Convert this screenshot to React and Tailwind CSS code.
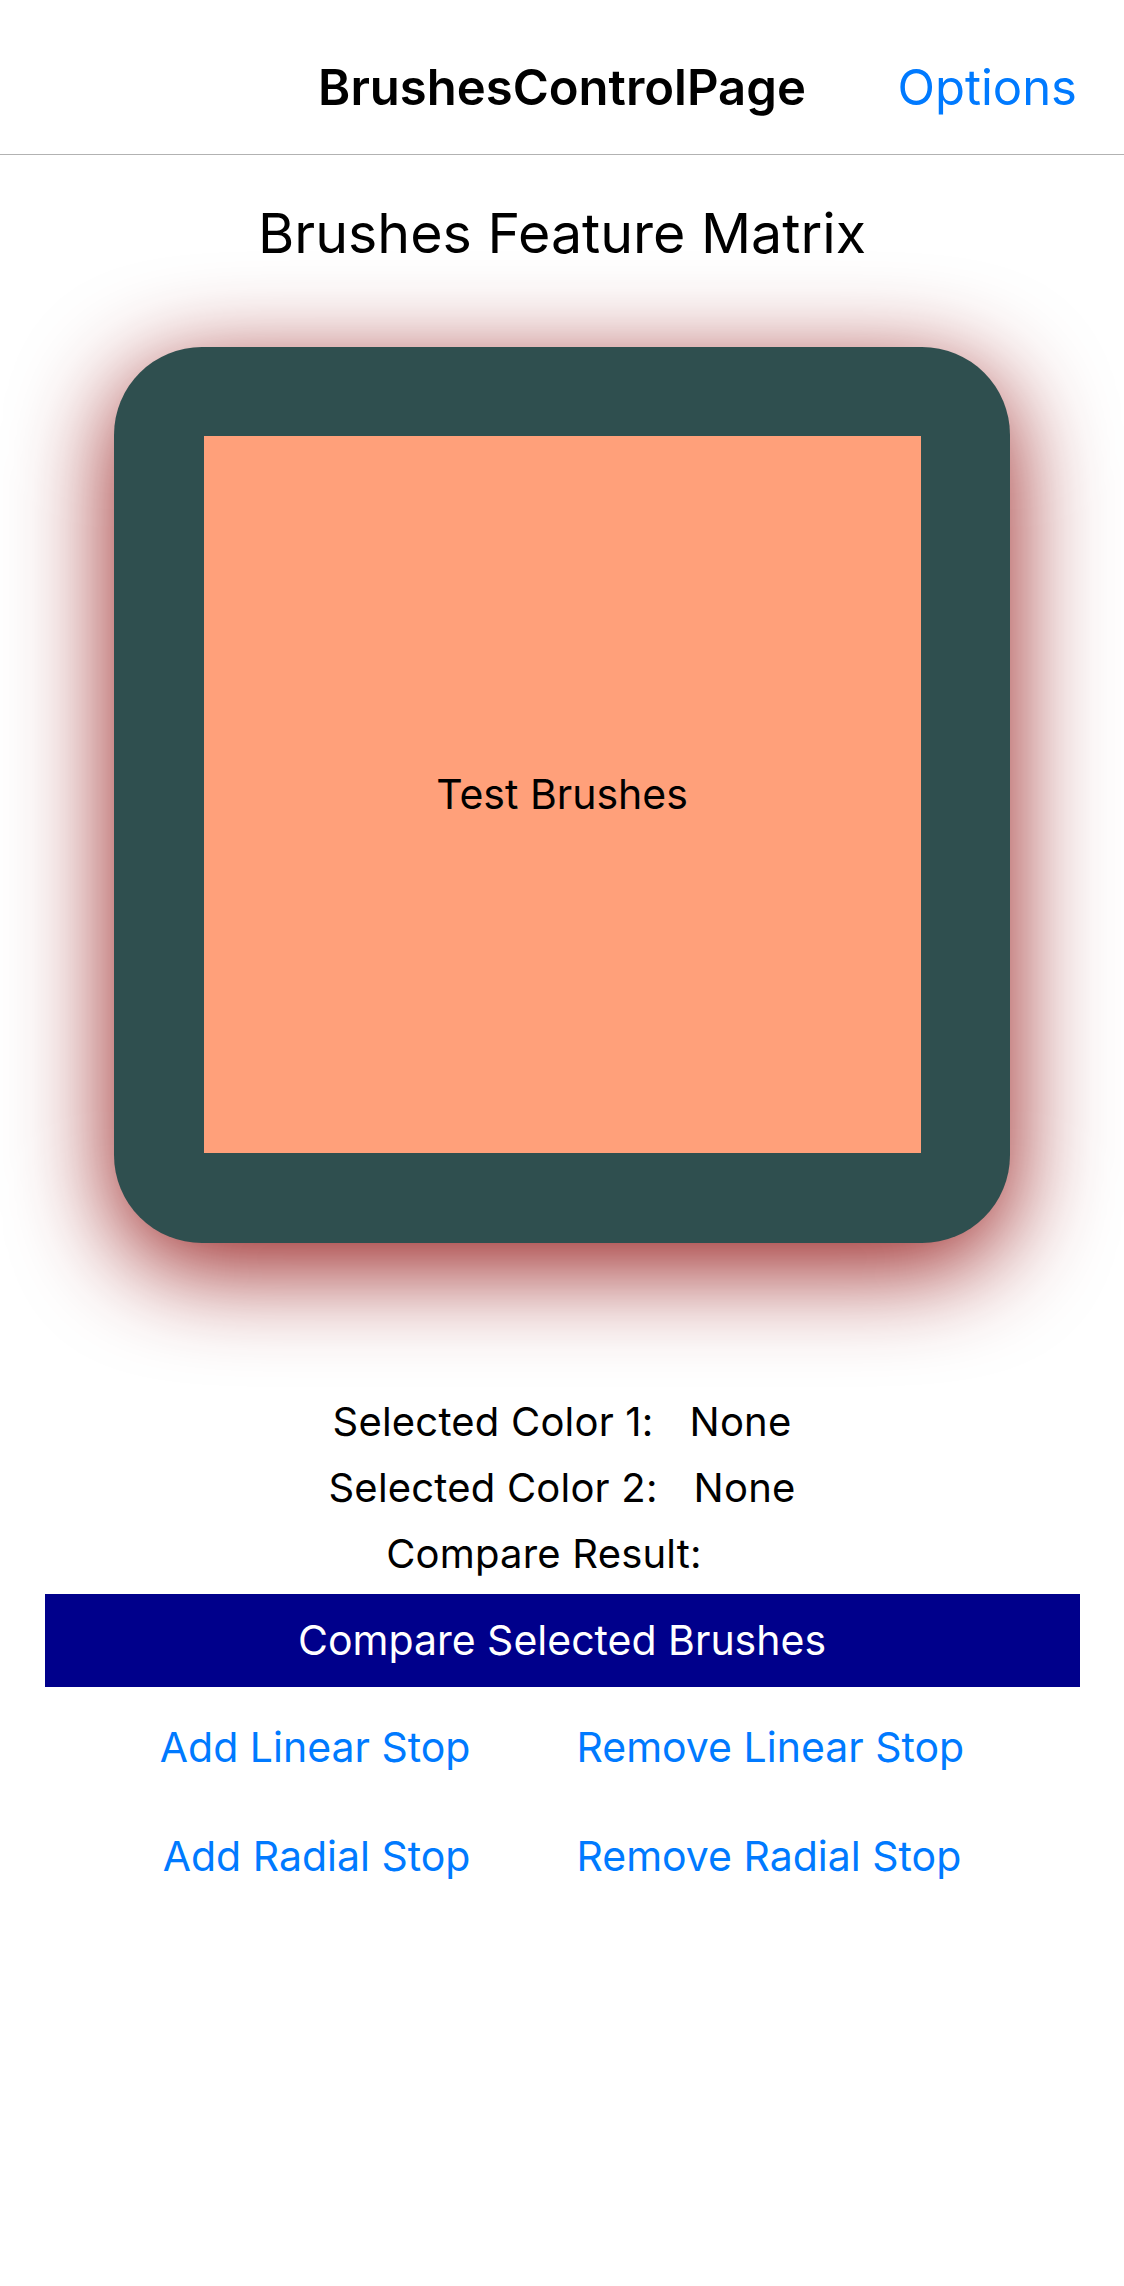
import React from "react";

const font = { fontFamily: "Inter, 'Noto Sans', sans-serif" };

const ResultRow = ({ label, value }) => (
  <div className="flex justify-center gap-[36px] text-[40px] leading-[66px] tracking-[0.2px] text-black">
    <span>{label}</span>
    <span>{value}</span>
  </div>
);

const App = () => {
  return (
    <div className="min-h-[2286px] w-[1124px] bg-white" style={font}>
      {/* NAV BAR */}
      <div className="relative h-[155px] border-b border-[#b2b2b2]">
        <div className="flex h-full items-start justify-center pt-[63px]">
          <h1 className="text-[49px] font-semibold leading-none text-black">BrushesControlPage</h1>
        </div>
        <button className="absolute right-[47px] top-[63px] text-[49px] leading-none text-[#007aff]">
          Options
        </button>
      </div>

      {/* CONTENT */}
      <div className="flex flex-col items-center">
        <h2 className="mt-[50px] text-[55.5px] leading-none text-black">Brushes Feature Matrix</h2>

        <div className="mt-[86px] flex h-[896px] w-[896px] items-center justify-center rounded-[88px] bg-[#2f4f4f] shadow-[0_24px_100px_rgba(139,0,0,0.9)]">
          <div className="flex h-[717px] w-[717px] items-center justify-center bg-[#ffa07a]">
            <span className="text-[41px] leading-none text-black">Test Brushes</span>
          </div>
        </div>

        <div className="mt-[146px] flex flex-col">
          <ResultRow label="Selected Color 1:" value="None" />
          <ResultRow label="Selected Color 2:" value="None" />
          <ResultRow label="Compare Result:" value="" />
        </div>

        <button className="mt-[7px] flex h-[93px] w-[1035px] items-center justify-center bg-[#00008b] text-[41px] leading-none text-white">
          Compare Selected Brushes
        </button>

        <div className="mt-[6px] flex flex-col text-[41px] leading-[109px] text-[#007aff]">
          <div className="flex justify-center gap-[106px]">
            <button>Add Linear Stop</button>
            <button>Remove Linear Stop</button>
          </div>
          <div className="flex justify-center gap-[106px]">
            <button>Add Radial Stop</button>
            <button>Remove Radial Stop</button>
          </div>
        </div>
      </div>
    </div>
  );
};

export default App;
